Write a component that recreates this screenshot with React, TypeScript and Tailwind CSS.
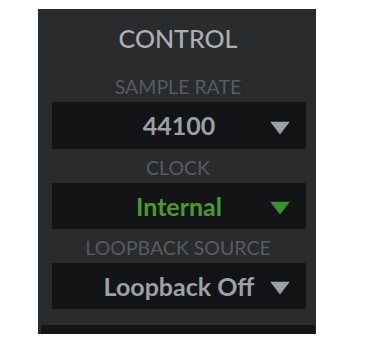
import React from "react";

function Arrow({ color }: { color: string }) {
  return (
    <svg
      className="absolute right-[16px] top-1/2 mt-[2px] -translate-y-1/2"
      width="20"
      height="13"
      viewBox="0 0 20 13"
    >
      <polygon points="0,0 20,0 10,13" fill={color} />
    </svg>
  );
}

function Label({ text }: { text: string }) {
  return (
    <div className="flex h-[34px] items-center justify-center pt-[4px] pl-[2px]">
      <span className="text-[19.5px] leading-none text-[#575b60]">{text}</span>
    </div>
  );
}

function Box({
  value,
  h,
  color,
  arrow,
}: {
  value: string;
  h: string;
  color: string;
  arrow: string;
}) {
  return (
    <div className={`relative ml-[14px] flex w-[254px] items-center justify-center bg-[#131415] ${h}`}>
      <span className={`text-[25px] font-bold leading-none ${color}`}>{value}</span>
      <Arrow color={arrow} />
    </div>
  );
}

export default function App() {
  return (
    <div className="h-[344px] w-[374px] bg-white pt-[9px]" style={{ fontFamily: "Lato, 'Noto Sans', sans-serif" }}>
      <div className="ml-[38px] flex h-[325px] w-[278px] flex-col bg-[#2a2b2d]">
        <div className="flex h-[59px] items-center justify-center pl-[2px]">
          <span className="text-[25px] font-medium leading-none text-[#abb0b5]">CONTROL</span>
        </div>
        <Label text="SAMPLE RATE" />
        <Box value="44100" h="h-[47px]" color="text-[#9ba1a7]" arrow="#9ba1a7" />
        <Label text="CLOCK" />
        <Box value="Internal" h="h-[46px]" color="text-[#4b9a2f]" arrow="#3f8f2a" />
        <Label text="LOOPBACK SOURCE" />
        <Box value="Loopback Off" h="h-[46px]" color="text-[#9ba1a7]" arrow="#9ba1a7" />
        <div className="flex-1" />
        <div className="ml-[3px] mr-[1px] h-[9px] bg-[#141516]" />
      </div>
    </div>
  );
}
